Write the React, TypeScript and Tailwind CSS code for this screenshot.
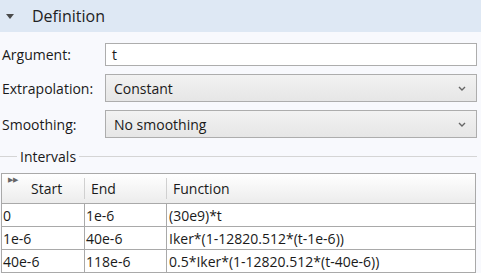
import React from "react";

const rows = [
  { start: "0", end: "1e-6", fn: "(30e9)*t" },
  { start: "1e-6", end: "40e-6", fn: "Iker*(1-12820.512*(t-1e-6))" },
  { start: "40e-6", end: "118e-6", fn: "0.5*Iker*(1-12820.512*(t-40e-6))" },
];

function Chevron() {
  return (
    <svg width="8" height="5" viewBox="0 0 8 5" className="mr-[10px]">
      <path d="M1 1 L4 4 L7 1" fill="none" stroke="#666" strokeWidth="1.4" />
    </svg>
  );
}

function Select({ value }: { value: string }) {
  return (
    <div className="flex h-[28px] flex-1 items-center justify-between border border-[#adadad] bg-gradient-to-b from-[#f2f2f2] to-[#e6e6e6] pl-[8px]">
      <span>{value}</span>
      <Chevron />
    </div>
  );
}

export default function App() {
  return (
    <div
      className="h-[273px] w-[481px] overflow-hidden bg-[#f8f9fd] text-[14px] text-[#1a1a1a]"
      style={{ fontFamily: '"Open Sans", "Noto Sans", sans-serif' }}
    >
      <div className="flex h-[32px] items-center bg-[#dee8f4]">
        <svg width="8" height="5" viewBox="0 0 8 5" className="ml-[6px]">
          <path d="M0 0 H8 L4 5 Z" fill="#4a4a4a" />
        </svg>
        <span className="ml-[18px] text-[16px] text-[#222]">Definition</span>
      </div>

      <div className="mt-[11px] flex items-center pr-[4px]">
        <span className="w-[105px] pl-[2px]">Argument:</span>
        <div className="flex h-[23px] flex-1 items-center border border-[#adadad] bg-white pl-[6px]">t</div>
      </div>
      <div className="mt-[8px] flex items-center pr-[4px]">
        <span className="w-[105px] pl-[2px]">Extrapolation:</span>
        <Select value="Constant" />
      </div>
      <div className="mt-[8px] flex items-center pr-[4px]">
        <span className="w-[105px] pl-[2px]">Smoothing:</span>
        <Select value="No smoothing" />
      </div>

      <div className="mt-[8px] flex items-center">
        <div className="h-px w-[17px] bg-[#d5d5d5]" />
        <span className="px-[3px]">Intervals</span>
        <div className="mr-[4px] h-px flex-1 bg-[#d5d5d5]" />
      </div>

      <div className="ml-[1px] mr-[5px] mt-[6px] border border-[#a9a9a9] bg-white">
        <div className="relative flex h-[29px] items-end bg-gradient-to-b from-white to-[#ececec] pb-[4px]">
          <span className="absolute left-[6px] top-[2px] text-[7px] leading-none text-[#666]">▶▶</span>
          <div className="w-[83px] border-r border-[#d0d0d0] pl-[29px]">Start</div>
          <div className="w-[82px] border-r border-[#d0d0d0] pl-[6px]">End</div>
          <div className="flex-1 pl-[6px]">Function</div>
        </div>
        {rows.map((r) => (
          <div key={r.start} className="flex h-[23px] items-center border-t border-[#a9a9a9]">
            <div className="flex h-full w-[83px] items-center border-r border-[#a9a9a9] pl-[1px]">{r.start}</div>
            <div className="flex h-full w-[82px] items-center border-r border-[#a9a9a9] pl-[1px]">{r.end}</div>
            <div className="flex-1 pl-[2px]">{r.fn}</div>
          </div>
        ))}
      </div>
    </div>
  );
}
